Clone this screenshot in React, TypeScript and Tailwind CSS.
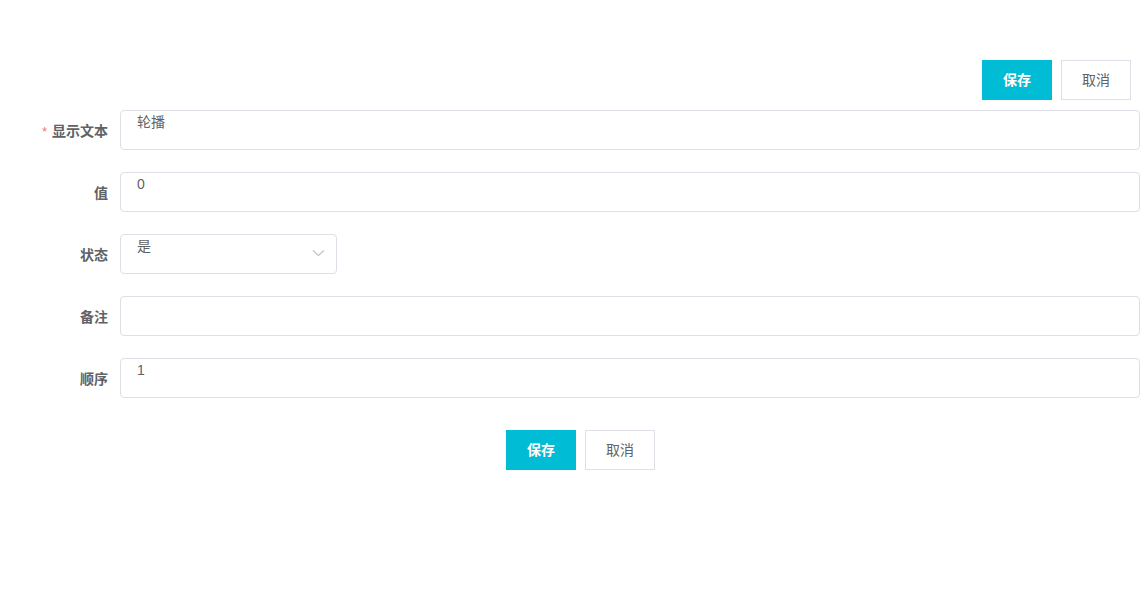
import React from "react";

const font = { fontFamily: '"Liberation Sans", "Noto Sans CJK SC", sans-serif' };

function Row({ label, required, children }: { label: string; required?: boolean; children: React.ReactNode }) {
  return (
    <div className="flex items-center mb-[22px]">
      <div className="w-[120px] pr-[12px] pt-[2px] text-right text-[14px] font-bold text-[#606266] leading-[20px]">
        {required && <span className="text-[#f56c6c] mr-[5px] font-normal text-[12px]">*</span>}
        {label}
      </div>
      {children}
    </div>
  );
}

function Input({ value, className = "flex-1" }: { value: string; className?: string }) {
  return (
    <div className={`${className} h-[40px] border border-[#dcdfe6] rounded-[4px] pl-[16px] pt-[1px] text-[14px] leading-[20px] text-[#606266]`}>
      {value}
    </div>
  );
}

function Buttons() {
  return (
    <div className="flex gap-[9px]">
      <button className="w-[70px] h-[40px] bg-[#00bcd4] text-white text-[14px] font-bold">保存</button>
      <button className="w-[70px] h-[40px] bg-white border border-[#dcdfe6] text-[#606266] text-[14px]">取消</button>
    </div>
  );
}

export default function App() {
  return (
    <div className="w-[1140px] h-[607px] bg-white overflow-hidden" style={font}>
      <div className="flex justify-end pt-[60px] pr-[9px]">
        <Buttons />
      </div>
      <div className="pt-[10px]">
        <Row label="显示文本" required>
          <Input value="轮播" />
        </Row>
        <Row label="值">
          <Input value="0" />
        </Row>
        <Row label="状态">
          <div className="relative w-[217px] h-[40px] border border-[#dcdfe6] rounded-[4px] pl-[16px] pt-[1px] text-[14px] leading-[20px] text-[#606266]">
            是
            <svg className="absolute right-[11px] top-[14px]" width="13" height="8" viewBox="0 0 13 8" fill="none">
              <path d="M1 1.5 L6.5 6.5 L12 1.5" stroke="#c0c4cc" strokeWidth="1.2" />
            </svg>
          </div>
        </Row>
        <Row label="备注">
          <Input value="" />
        </Row>
        <Row label="顺序">
          <Input value="1" />
        </Row>
        <div className="flex pl-[506px] pt-[10px]">
          <Buttons />
        </div>
      </div>
    </div>
  );
}
